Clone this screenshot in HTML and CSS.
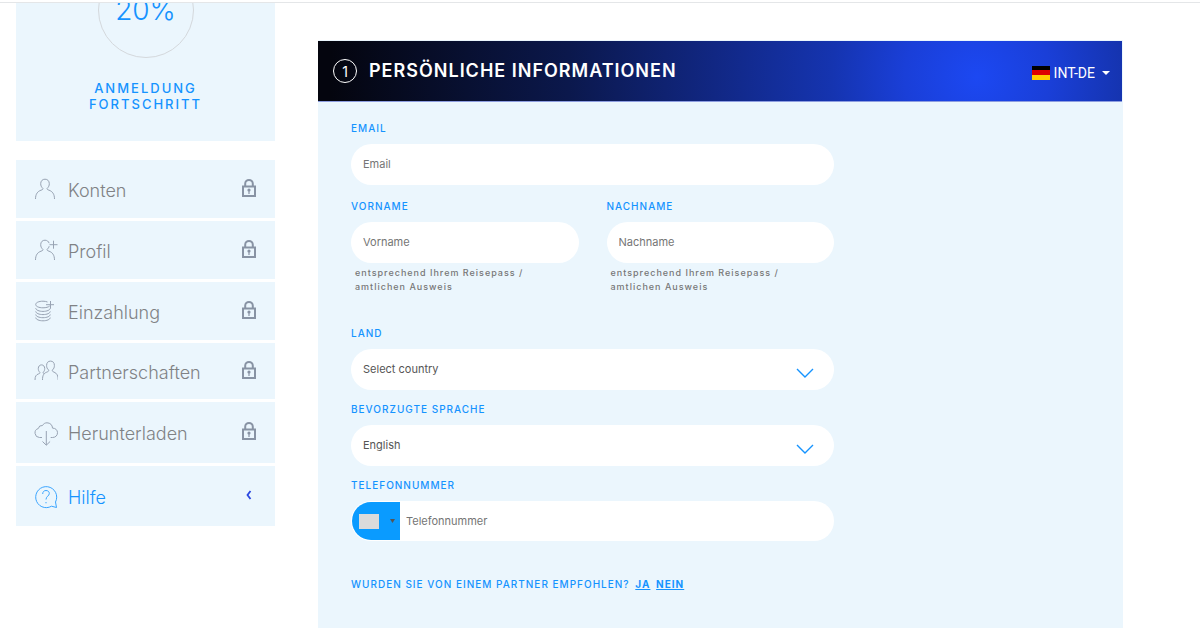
FILE: index.html
```html
<!DOCTYPE html>
<html lang="de">
<head>
<meta charset="utf-8">
<meta name="viewport" content="width=device-width, initial-scale=1">
<title>Persönliche Informationen</title>
<link rel="stylesheet" href="styles.css">
</head>
<body>
<svg class="sprite" aria-hidden="true">
  <symbol id="lock" viewBox="0 0 16 20">
    <path d="M4.200 8.500V5.700a3.800 3.800 0 0 1 7.600 0V8.500" fill="none" stroke="currentColor" stroke-width="2"/>
    <rect x="2" y="8.500" width="12" height="9.500" fill="none" stroke="currentColor" stroke-width="2"/>
    <circle cx="8" cy="12" r="1.600" fill="currentColor"/>
    <path d="M8 12v4" stroke="currentColor" stroke-width="1.200"/>
  </symbol>
</svg>
<div class="topline"></div>
<div class="page">
  <aside class="sidebar">
    <section class="progress">
      <div class="ring">20%</div>
      <p class="progress-text">Anmeldung<br>Fortschritt</p>
    </section>
    <nav class="menu">
      <a class="item" href="#konten">
        <svg class="icon" viewBox="0 0 24 24"><path d="M1.500 21c0-5 2.200-7.700 5.500-8.800 1.400-.5 2.300-.9 1.900-1.800C7.300 9 6.700 7.500 6.700 5.700c0-2.800 1.800-4.500 4.300-4.500s4.300 1.700 4.300 4.500c0 1.800-.6 3.300-2.200 4.700-.4.900.5 1.300 1.900 1.800 3.300 1.100 5.500 3.800 5.500 8.800"/></svg>
        <span class="name">Konten</span><svg class="lock"><use href="#lock"/></svg>
      </a>
      <a class="item" href="#profil">
        <svg class="icon" viewBox="0 0 24 24"><path d="M1.500 21c0-5 2.200-7.700 5.500-8.800 1.400-.5 2.300-.9 1.900-1.800C7.300 9 6.700 7.500 6.700 5.700c0-2.800 1.800-4.500 4.300-4.500 2 0 3.600 1.200 4.100 3M15.200 7.200c-.3 1.200-.9 2.200-2.100 3.200-.4.900.5 1.300 1.900 1.800 3.300 1.100 5.500 3.800 5.500 8.800M15.500 5.700h8M19.500 1.700v8"/></svg>
        <span class="name">Profil</span><svg class="lock"><use href="#lock"/></svg>
      </a>
      <a class="item" href="#einzahlung">
        <svg class="icon" viewBox="0 0 24 24"><path d="M13.500 2C12.200 1.500 10.700 1.200 9 1.200c-4.200 0-7.300 1.400-7.300 3.300S4.800 7.800 9 7.800c3 0 5.500-.7 6.700-1.800M12 4.700h8M16.500 1v7.500M1.700 8.200c.3 1.900 3.400 3.200 7.300 3.200s7-1.300 7.300-3.200M1.700 11.400c.3 1.900 3.400 3.200 7.300 3.200s7-1.300 7.300-3.200M1.700 14.500c.3 1.900 3.400 3.200 7.300 3.200s7-1.300 7.300-3.200M1.700 17.600c.3 1.900 3.400 3.200 7.300 3.200s7-1.300 7.300-3.200"/></svg>
        <span class="name">Einzahlung</span><svg class="lock"><use href="#lock"/></svg>
      </a>
      <a class="item short" href="#partnerschaften">
        <svg class="icon" viewBox="0 0 24 24"><path d="M1 20c0-3.800 1.200-5.300 3.500-6.100 1.300-.4 1.800-.9 1.200-1.800C4.700 11.200 4.300 10.200 4.300 8.500c0-2.200 1.300-3.600 3.200-3.600s3.200 1.400 3.200 3.600c0 1.600-.4 2.700-1.400 3.600-.4.900 0 1.300.9 1.600M8.500 20c0-4.700 1.200-6.700 4.300-7.900 1.700-.6 2.300-1.200 1.700-2.200-1.400-1.200-1.900-2.600-1.900-4.500 0-2.700 1.500-4.300 3.900-4.300s3.900 1.600 3.900 4.300c0 1.900-.5 3.300-1.900 4.500-.6 1 0 1.600 1.500 2.200 2.900 1.200 4.200 3.400 4.200 7.900"/></svg>
        <span class="name">Partnerschaften</span><svg class="lock"><use href="#lock"/></svg>
      </a>
      <a class="item tall" href="#herunterladen">
        <svg class="icon" viewBox="0 0 24 24"><path d="M8 15.500H5.500a4.600 4.600 0 0 1-1.200-9A3.800 3.800 0 0 1 8.500 3.500C9.500 1.700 11 .8 13 .8c3.200 0 5.500 2.300 5.500 5.300 3 0 5 2 5 4.600 0 2.800-2 4.800-5 4.800h-1.800M12.300 9v14M8.500 19.500l3.800 3.700 3.800-3.700"/></svg>
        <span class="name">Herunterladen</span><svg class="lock"><use href="#lock"/></svg>
      </a>
      <a class="item help" href="#hilfe">
        <svg class="icon" viewBox="0 0 24 24"><path d="M22.500 22.500l-1-5.500a10.500 10.500 0 1 0-4 4.200zM8.700 9c0-2.200 1.300-3.500 3.300-3.500s3.300 1.200 3.300 3c0 2.500-3.300 2.800-3.300 6M12 17v1.300"/></svg>
        <span class="name">Hilfe</span>
        <svg class="lock" viewBox="0 0 16 20"><path d="M9.500 6L6.500 10l3 4" fill="none" stroke="#2a47e0" stroke-width="1.800"/></svg>
      </a>
    </nav>
  </aside>
  <main class="panel">
    <header class="head">
      <span class="step">1</span>
      <h1 class="title">Persönliche Informationen</h1>
      <button class="lang" type="button">
        <svg class="flag" viewBox="0 0 18 14"><path fill="#000" d="M0 0h18v5H0z"/><path fill="#d00" d="M0 4h18v5H0z"/><path fill="#fc0" d="M0 9h18v5H0z"/></svg>
        INT-DE
        <svg class="caret" viewBox="0 0 8 4"><path d="M0 0h8L4 4z" fill="currentColor"/></svg>
      </button>
    </header>
    <form class="form">
      <div class="field">
        <label for="email">Email</label>
        <input class="control" id="email" type="email" placeholder="Email">
      </div>
      <div class="pair">
        <div class="field">
          <label for="first">Vorname</label>
          <input class="control" id="first" type="text" placeholder="Vorname">
          <p class="hint">entsprechend Ihrem Reisepass /<br>amtlichen Ausweis</p>
        </div>
        <div class="field">
          <label for="last">Nachname</label>
          <input class="control" id="last" type="text" placeholder="Nachname">
          <p class="hint">entsprechend Ihrem Reisepass /<br>amtlichen Ausweis</p>
        </div>
      </div>
      <div class="field">
        <label for="country">Land</label>
        <div class="select">
          <select class="control" id="country"><option>Select country</option></select>
          <svg class="chevron" viewBox="0 0 18 10"><path d="M1 1l8 8 8-8"/></svg>
        </div>
      </div>
      <div class="field">
        <label for="language">Bevorzugte Sprache</label>
        <div class="select">
          <select class="control" id="language"><option>English</option></select>
          <svg class="chevron" viewBox="0 0 18 10"><path d="M1 1l8 8 8-8"/></svg>
        </div>
      </div>
      <div class="field">
        <label for="phone">Telefonnummer</label>
        <div class="phone">
          <button class="code" type="button" aria-label="Ländervorwahl"><span class="blank"></span><svg class="tick" viewBox="0 0 5 4"><path d="M0 0h5L2.500 4z" fill="#555"/></svg></button>
          <input class="number" id="phone" type="tel" placeholder="Telefonnummer">
        </div>
      </div>
      <p class="question">Wurden Sie von einem Partner empfohlen? <a href="#ja">Ja</a> <a href="#nein">Nein</a></p>
    </form>
  </main>
</div>
</body>
</html>
```
FILE: styles.css
```css
* { box-sizing: border-box; }
body {
  margin: 0;
  background: #fff;
  color: #808080;
  font-family: Inter, "Liberation Sans", sans-serif;
}
p, h1 { margin: 0; }
.sprite { display: none; }
.topline { height: 3px; border-bottom: 1px solid #e4e6e8; }
.page {
  display: grid;
  grid-template-columns: 259px minmax(0, 1fr);
  column-gap: 43px;
  padding: 0 77px 0 16px;
}
.progress {
  display: flex;
  flex-direction: column;
  align-items: center;
  gap: 22px;
  padding-bottom: 29px;
  background: #ebf6fd;
  color: #1593ff;
  overflow: hidden;
}
.ring {
  display: flex;
  align-items: center;
  justify-content: center;
  width: 96px;
  height: 96px;
  margin-top: -41px;
  border: 1px solid #d4d8dc;
  border-radius: 50%;
  font-size: 28px;
  font-weight: 300;
}
.progress-text {
  font-size: 13px;
  line-height: 16px;
  font-weight: 500;
  letter-spacing: 2px;
  text-align: center;
  text-transform: uppercase;
}
.menu {
  display: flex;
  flex-direction: column;
  gap: 3px;
  margin-top: 19px;
}
.item {
  display: flex;
  align-items: center;
  gap: 10px;
  min-height: 58px;
  padding: 0 18px;
  background: #ebf6fd;
  color: #808285;
  font-size: 18px;
  line-height: 24px;
  font-weight: 300;
  text-decoration: none;
}
.short { min-height: 56px; }
.tall { min-height: 61px; }
.help { min-height: 60px; color: #1593ff; }
.name { flex: 1; padding-top: 3px; }
.icon {
  width: 24px;
  height: 24px;
  margin-top: 2px;
  fill: none;
  stroke: #98a3b3;
  stroke-width: 1;
}
.help .icon { stroke: #3ba5ff; }
.lock { width: 16px; height: 20px; margin-bottom: 3px; color: #8893a4; }

.panel {
  min-height: 588px;
  margin-top: 37px;
  padding-top: 1px;
  background: #ebf6fd;
}
.head {
  display: flex;
  align-items: center;
  gap: 12px;
  height: 61px;
  margin-right: 1px;
  padding: 0 12px 0 15px;
  border-bottom: 1px solid #8d9de0;
  background: radial-gradient(circle farthest-corner at 82% 60%, #1c48f2 0%, #1a3fd8 11%, #1534b0 22%, #112783 40%, #0b184c 62%, #04050e 98%);
  color: #fff;
}
.step {
  display: flex;
  align-items: center;
  justify-content: center;
  width: 24px;
  height: 24px;
  border: 1px solid #fff;
  border-radius: 50%;
  font-size: 14px;
}
.title {
  flex: 1;
  font-size: 18px;
  line-height: 24px;
  font-weight: 600;
  letter-spacing: 1px;
  text-transform: uppercase;
}
.lang {
  display: flex;
  align-items: center;
  gap: 4px;
  padding: 3px 0 0;
  border: 0;
  background: none;
  color: #fff;
  font: 14px/20px Roboto, sans-serif;
}
.flag { width: 18px; height: 14px; }
.caret { width: 8px; height: 4px; margin-left: 3px; }

.form { width: 60%; min-width: 300px; margin-left: 33px; padding-top: 18px; }
.field label {
  display: block;
  margin-bottom: 8px;
  color: #1593ff;
  font-size: 10px;
  line-height: 16px;
  font-weight: 500;
  letter-spacing: 1px;
  text-transform: uppercase;
}
.control {
  display: block;
  width: 100%;
  height: 41px;
  padding: 0 12px 1px;
  border: 0;
  border-radius: 21px;
  background: #fff;
  color: #555;
  font: 11px/16px Inter, sans-serif;
  appearance: none;
}
.control::placeholder, .number::placeholder { color: #757575; opacity: 1; }
.pair {
  display: grid;
  grid-template-columns: 1fr 1fr;
  gap: 28px;
  margin: 13px 0 31px;
}
.hint {
  padding: 3px 4px 0;
  font-size: 9px;
  line-height: 14px;
  font-weight: 500;
  letter-spacing: 1px;
  color: #777;
}
.select { position: relative; margin-bottom: 11px; }
.chevron {
  position: absolute;
  right: 20px;
  bottom: 12px;
  width: 18px;
  height: 10px;
  fill: none;
  stroke: #1593ff;
  stroke-width: 1.4;
  pointer-events: none;
}
.phone {
  display: flex;
  height: 40px;
  padding: 1px;
  border-radius: 20px;
  background: #fff;
  overflow: hidden;
}
.code {
  display: flex;
  align-items: center;
  gap: 11px;
  width: 48px;
  padding: 0 0 0 7px;
  border: 0;
  border-radius: 19px 0 0 19px;
  background: #0a9bff;
}
.blank { width: 20px; height: 15px; background: #dbdbdb; }
.tick { width: 5px; height: 4px; }
.number {
  flex: 1;
  min-width: 0;
  padding: 0 6px 1px;
  border: 0;
  background: none;
  font: 11px/16px Inter, sans-serif;
}
.question {
  margin-top: 35px;
  color: #1593ff;
  font-size: 10px;
  line-height: 16px;
  font-weight: 500;
  letter-spacing: 1px;
  text-transform: uppercase;
}
.question a { margin-left: 2px; color: inherit; font-weight: 700; }
```
